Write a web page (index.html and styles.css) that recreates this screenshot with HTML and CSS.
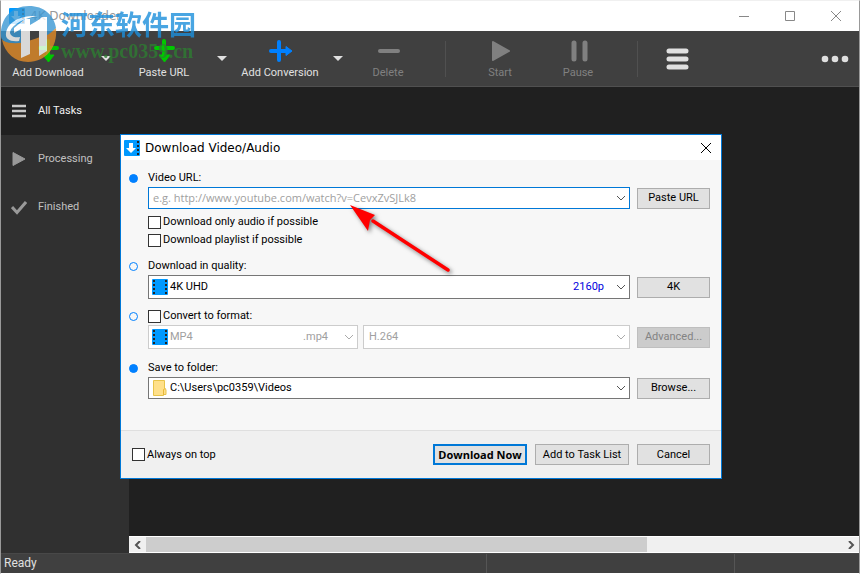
FILE: index.html
```html
<!DOCTYPE html>
<html lang="en">
<head>
  <meta charset="UTF-8">
  <meta name="viewport" content="width=device-width, initial-scale=1.0">
  <title>4K Downloader</title>
  <link rel="stylesheet" href="styles.css">
</head>
<body>

  <div class="window">
    <header class="titlebar">
      <svg class="app-icon" width="16" height="16" viewBox="0 0 16 16">
        <rect width="16" height="16" rx="1" fill="#0099ff"/>
        <path d="M5 3h4v5h3l-5 5-5-5h3z" fill="#fff"/>
        <path d="M14 1v15" stroke="#222" stroke-width="2" stroke-dasharray="2 2"/>
      </svg>
      <h1>4K Downloader</h1>
      <div class="window-buttons">
        <button aria-label="Minimize"><svg width="12" height="12" viewBox="0 0 12 12"><path d="M1 6.500h10"/></svg></button>
        <button aria-label="Maximize"><svg width="12" height="12" viewBox="0 0 12 12"><path d="M1.500 1.500h9v9h-9z"/></svg></button>
        <button aria-label="Close"><svg width="12" height="12" viewBox="0 0 12 12"><path d="M1 1l10 10M11 1L1 11"/></svg></button>
      </div>
    </header>

    <nav class="toolbar">
      <button class="tool">
        <svg width="24" height="24" viewBox="0 0 24 24"><path d="M12 2v14M4 9h17" stroke="#00c800" stroke-width="4" stroke-linecap="round"/><path d="M7 16h11l-5.500 7z" fill="#00c800" stroke="#00c800" stroke-linejoin="round"/></svg>
        Add Download
      </button>
      <button class="drop" aria-label="Add Download options"></button>
      <button class="tool">
        <svg width="24" height="24" viewBox="0 0 24 24"><path d="M12 2v14M4 9h17" stroke="#00c800" stroke-width="4" stroke-linecap="round"/><path d="M7 16h11l-5.500 7z" fill="#00c800" stroke="#00c800" stroke-linejoin="round"/></svg>
        Paste URL
      </button>
      <button class="drop" aria-label="Paste URL options"></button>
      <button class="tool">
        <svg width="24" height="24" viewBox="0 0 24 24"><path d="M11 3v18M3 12h15" stroke="#0080ff" stroke-width="4" stroke-linecap="round"/><path d="M18 7.500l6 4.500-6 4.500z" fill="#0080ff" stroke="#0080ff" stroke-linejoin="round"/></svg>
        Add Conversion
      </button>
      <button class="drop" aria-label="Add Conversion options"></button>
      <button class="tool tool-delete" disabled>
        <svg width="24" height="24" viewBox="0 0 24 24"><path d="M4 12h18" stroke="#808080" stroke-width="4" stroke-linecap="round"/></svg>
        Delete
      </button>
      <span class="separator separator-start"></span>
      <button class="tool tool-run" disabled>
        <svg width="24" height="24" viewBox="0 0 24 24"><path d="M5 3l16 9-16 9z" fill="#808080" stroke="#808080" stroke-width="2" stroke-linejoin="round"/></svg>
        Start
      </button>
      <button class="tool tool-run" disabled>
        <svg width="24" height="24" viewBox="0 0 24 24"><path d="M8 4v16M19 4v16" stroke="#808080" stroke-width="5" stroke-linecap="round"/></svg>
        Pause
      </button>
      <span class="separator separator-end"></span>
      <button class="tool tool-menu" aria-label="View">
        <svg width="24" height="24" viewBox="0 0 24 24"><path d="M4 4h17M4 12h17M4 20h17" stroke="#e0e0e0" stroke-width="5" stroke-linecap="round"/></svg>
      </button>
      <button class="more" aria-label="More">
        <svg width="28" height="8" viewBox="0 0 28 8" fill="#e0e0e0"><circle cx="4" cy="4" r="3.300"/><circle cx="14" cy="4" r="3.300"/><circle cx="24" cy="4" r="3.300"/></svg>
      </button>
    </nav>

    <div class="workspace">
      <aside class="sidebar">
        <button class="active">
          <svg width="16" height="16" viewBox="0 0 16 16"><path d="M1 3h14M1 8h14M1 13h14" stroke="#c8c8c8" stroke-width="2.500"/></svg>
          All Tasks
        </button>
        <button>
          <svg width="16" height="16" viewBox="0 0 16 16"><path d="M2 1.500l12 6.500-12 6.500z" fill="#999" stroke="#999" stroke-linejoin="round"/></svg>
          Processing
        </button>
        <button>
          <svg width="16" height="16" viewBox="0 0 16 16"><path d="M1 8l5 5.500L15 3" fill="none" stroke="#999" stroke-width="3"/></svg>
          Finished
        </button>
      </aside>
      <main class="tasks">
        <div class="scrollbar">
          <button aria-label="Scroll left"><svg width="8" height="8" viewBox="0 0 8 8"><path d="M6 0L2 4l4 4"/></svg></button>
          <div class="track"><div class="thumb"></div></div>
          <button aria-label="Scroll right"><svg width="8" height="8" viewBox="0 0 8 8"><path d="M2 0l4 4-4 4"/></svg></button>
        </div>
      </main>
    </div>

    <footer class="statusbar">
      <span>Ready</span>
      <span></span>
      <span></span>
    </footer>
  </div>

  <!-- Site watermark -->
  <div class="watermark">
    <svg width="58" height="62" viewBox="0 0 58 62">
      <path d="M2 38C16 44 40 38 56 26C58 46 45 60 28 60C15 60 5 51 2 38z" fill="#e08a28"/>
      <path d="M1 34C0 16 12 4 29 4C44 4 54 13 56 26C50 32 46 34 42 35V16L30 23V39C20 42 9 42 4 39C2 38 1 36 1 34z" fill="#3a98d4"/>
      <path d="M6 31C8 18 24 13 37 14C25 16 12 22 10 30C10 34 14 36 20 35L19 39C10 40 5 37 6 31z" fill="#fff"/>
      <path d="M14 26l11-9h5v35l-9 4V27l-7 4zM33 23l9-8h5v34l-8 5V25l-6 3z" fill="#fff"/>
    </svg>
    <div class="watermark-text">
      <p class="watermark-name" lang="zh">河东软件园</p>
      <p class="watermark-site">www.pc0359.cn</p>
    </div>
  </div>

  <form class="dialog" role="dialog" aria-labelledby="dialogTitle">
    <div class="dialog-title">
      <svg width="16" height="16" viewBox="0 0 16 16">
        <rect width="16" height="16" rx="1" fill="#0099ff"/>
        <path d="M5 3h4v5h3l-5 5-5-5h3z" fill="#fff"/>
        <path d="M14 1v15" stroke="#222" stroke-width="2" stroke-dasharray="2 2"/>
      </svg>
      <h2 id="dialogTitle">Download Video/Audio</h2>
      <button type="button" class="dialog-close" aria-label="Close"><svg width="12" height="12" viewBox="0 0 12 12"><path d="M1 1l10 10M11 1L1 11"/></svg></button>
    </div>

    <div class="dialog-body">
      <section class="group">
        <span class="dot filled"></span>
        <label class="caption" for="url">Video URL:</label>
        <div class="field focused">
          <input type="text" id="url" placeholder="e.g. http://www.youtube.com/watch?v=CevxZvSJLk8">
          <svg class="chevron" width="10" height="6" viewBox="0 0 10 6"><path d="M1 1l4 4 4-4"/></svg>
        </div>
        <button type="button" class="btn">Paste URL</button>
        <div class="checks">
          <label class="check"><input type="checkbox">Download only audio if possible</label>
          <label class="check"><input type="checkbox">Download playlist if possible</label>
        </div>
      </section>

      <section class="group">
        <span class="dot"></span>
        <label class="caption" for="quality">Download in quality:</label>
        <div class="field tall">
          <svg width="16" height="16" viewBox="0 0 16 16"><rect width="16" height="16" rx="1" fill="#0099ff"/><path d="M2 1v15M14 1v15" stroke="#222" stroke-width="2" stroke-dasharray="2 2"/></svg>
          <select id="quality"><option>4K UHD</option></select>
          <span class="resolution">2160p</span>
          <svg class="chevron" width="10" height="6" viewBox="0 0 10 6"><path d="M1 1l4 4 4-4"/></svg>
        </div>
        <button type="button" class="btn">4K</button>
      </section>

      <section class="group">
        <span class="dot"></span>
        <label class="check caption-check"><input type="checkbox">Convert to format:</label>
        <div class="formats">
          <div class="field tall disabled">
            <svg width="16" height="16" viewBox="0 0 16 16"><rect width="16" height="16" rx="1" fill="#0099ff"/><path d="M2 1v15M14 1v15" stroke="#222" stroke-width="2" stroke-dasharray="2 2"/></svg>
            <select aria-label="Format" disabled><option>MP4</option></select>
            <span class="extension">.mp4</span>
            <svg class="chevron" width="10" height="6" viewBox="0 0 10 6"><path d="M1 1l4 4 4-4"/></svg>
          </div>
          <div class="field tall disabled">
            <select aria-label="Codec" disabled><option>H.264</option></select>
            <svg class="chevron" width="10" height="6" viewBox="0 0 10 6"><path d="M1 1l4 4 4-4"/></svg>
          </div>
        </div>
        <button type="button" class="btn" disabled>Advanced...</button>
      </section>

      <section class="group">
        <span class="dot filled"></span>
        <label class="caption" for="folder">Save to folder:</label>
        <div class="field">
          <svg width="16" height="18" viewBox="0 0 16 18"><path d="M1.500 1.500h11v8l1.500 1v5h-2.500v1h-10z" fill="#ffe08a" stroke="#e8c44a"/><path d="M11.500 16v-5.500l2-1" fill="none" stroke="#e8b83a"/></svg>
          <select id="folder"><option>C:\Users\pc0359\Videos</option></select>
          <svg class="chevron" width="10" height="6" viewBox="0 0 10 6"><path d="M1 1l4 4 4-4"/></svg>
        </div>
        <button type="button" class="btn">Browse...</button>
      </section>
    </div>

    <div class="dialog-footer">
      <label class="check"><input type="checkbox">Always on top</label>
      <button type="button" class="btn wide default">Download Now</button>
      <button type="button" class="btn wide">Add to Task List</button>
      <button type="button" class="btn">Cancel</button>
    </div>
  </form>

  <!-- Pointer to the URL field -->
  <svg class="pointer" width="114" height="80" viewBox="0 0 114 80">
    <path d="M103 69L28 20" stroke="#f00" stroke-width="3.500" stroke-linecap="round"/>
    <path d="M5 4L30 14L25 19L23 30z" fill="#f00"/>
  </svg>

</body>
</html>
```

FILE: styles.css
```css
* {
  box-sizing: border-box;
}

body {
  margin: 0;
  font-family: Roboto, "Open Sans", sans-serif;
  font-size: 11px;
  line-height: 18px;
  color: #000;
}

button,
input,
select {
  font: inherit;
  color: inherit;
  margin: 0;
  padding: 0;
}

button {
  border: none;
  background: none;
}

h1,
h2,
p {
  margin: 0;
  font-weight: normal;
}

svg {
  flex: none;
}

.window {
  display: flex;
  flex-direction: column;
  height: 100vh;
  border: 1px solid #999;
  border-top-color: #f0f0f0;
  border-bottom-color: #fff;
  background-color: #202020;
}

.titlebar {
  display: flex;
  align-items: center;
  height: 30px;
  padding-left: 8px;
  background-color: #fff;
}

.titlebar h1 {
  margin-left: 5px;
  font-family: "DejaVu Sans", sans-serif;
  font-size: 12px;
  color: #999;
}

.window-buttons {
  display: flex;
  margin-left: auto;
}

.window-buttons button {
  display: flex;
  align-items: center;
  justify-content: center;
  width: 46px;
  height: 30px;
}

.window-buttons svg,
.dialog-close svg {
  fill: none;
  stroke: #888;
}

.toolbar {
  display: flex;
  align-items: center;
  height: 56px;
  padding-left: 1px;
  background-color: #404040;
  border-bottom: 1px solid #505050;
  color: #e0e0e0;
}

.tool {
  display: flex;
  flex: none;
  flex-direction: column;
  align-items: center;
  width: 92px;
  padding-top: 4px;
  line-height: 20px;
  white-space: nowrap;
}

.tool:disabled {
  color: #808080;
}

.tool-delete {
  width: 76px;
}

.tool-run,
.tool-menu {
  width: 78px;
}

.tool-menu {
  padding-top: 0;
}

.drop {
  display: flex;
  justify-content: center;
  width: 24px;
}

.drop::before {
  content: "";
  border: 5px solid transparent;
  border-top-color: #e0e0e0;
  border-bottom: none;
}

.separator {
  width: 1px;
  height: 36px;
  background-color: #505050;
}

.separator-start {
  margin: 0 15px 0 19px;
}

.separator-end {
  margin-left: 20px;
}

.more {
  display: flex;
  margin-left: auto;
  padding-right: 10px;
}

.workspace {
  display: flex;
  flex: 1;
  min-height: 0;
}

.sidebar {
  width: 128px;
  background-color: #303030;
}

.sidebar button {
  display: flex;
  align-items: center;
  gap: 11px;
  width: 100%;
  height: 48px;
  padding-left: 10px;
  color: #c0c0c0;
}

.sidebar .active {
  background-color: #202020;
  color: #f0f0f0;
}

.tasks {
  display: flex;
  flex: 1;
  flex-direction: column;
  justify-content: flex-end;
}

.scrollbar {
  display: flex;
  height: 17px;
  background-color: #f0f0f0;
  border-top: 1px solid #fff;
  border-bottom: 1px solid #fff;
}

.scrollbar button {
  display: flex;
  align-items: center;
  justify-content: center;
  width: 17px;
}

.scrollbar svg {
  fill: none;
  stroke: #555;
  stroke-width: 2;
}

.track {
  flex: 1;
}

.thumb {
  width: 72%;
  height: 100%;
  background-color: #cdcdcd;
}

.statusbar {
  display: grid;
  grid-template-columns: 486px 248px 1fr;
  height: 20px;
  background-color: #404040;
  border-top: 1px solid #484848;
  color: #e0e0e0;
  font-size: 12px;
}

.statusbar span {
  padding-left: 3px;
  border-right: 1px solid #555;
}

.statusbar span:last-child {
  border-right: none;
}

.watermark {
  position: absolute;
  top: 2px;
  left: 0;
  display: flex;
  gap: 3px;
  opacity: 0.8;
}

.watermark-text {
  padding-top: 7px;
}

.watermark-name {
  font-family: "Noto Sans CJK SC", sans-serif;
  font-size: 27px;
  font-weight: bold;
  line-height: 30px;
  color: #1c8fdb;
}

.watermark-site {
  font-family: "Liberation Serif", serif;
  font-size: 20px;
  font-weight: bold;
  line-height: 24px;
  color: #2e7d32;
}

.dialog {
  position: absolute;
  top: 134px;
  left: 120px;
  width: 70%;
  border: 1px solid #0078d7;
  background-color: #f7f7f7;
}

.dialog-title {
  display: flex;
  align-items: center;
  height: 25px;
  padding: 0 9px 0 3px;
  background-color: #fff;
}

.dialog-title h2 {
  margin-left: 5px;
  font-family: "DejaVu Sans", sans-serif;
  font-size: 12px;
}

.dialog-close {
  display: flex;
  margin-left: auto;
}

.dialog-close svg {
  stroke: #000;
}

.dialog-body {
  display: flex;
  flex-direction: column;
  gap: 8px;
  padding: 9px 11px 31px 0;
}

.group {
  display: grid;
  grid-template-columns: 27px 1fr 73px;
  align-items: center;
}

.group:last-child {
  margin-top: 2px;
}

.dot {
  width: 9px;
  height: 9px;
  margin-left: 8px;
  border: 1px solid #0080ff;
  border-radius: 50%;
}

.dot.filled {
  background-color: #0080ff;
}

.caption,
.caption-check {
  grid-column: 2 / 4;
}

.caption-check {
  height: 18px;
}

.field {
  display: flex;
  grid-column: 2;
  align-items: center;
  height: 22px;
  margin-right: 7px;
  padding: 0 3px;
  border: 1px solid #767676;
  background-color: #fff;
}

.field.tall {
  height: 24px;
}

.field.focused {
  border-color: #0078d7;
}

.field.disabled {
  border-color: #ccc;
  color: #a0a0a0;
}

.field input,
.field select {
  flex: 1;
  min-width: 0;
  padding-left: 2px;
  border: none;
  outline: none;
  background: none;
  appearance: none;
}

.field select {
  opacity: 1;
}

.field input {
  padding-left: 1px;
  font-family: "Open Sans", sans-serif;
}

.field input::placeholder {
  color: #a0a0a0;
}

.chevron {
  fill: none;
  stroke: #555;
}

.disabled .chevron {
  stroke: #aaa;
}

.resolution {
  margin-right: 12px;
  color: #00d;
}

.extension {
  margin-right: 16px;
}

.formats {
  display: grid;
  grid-column: 2;
  grid-template-columns: 215px 1fr;
}

.formats .field {
  grid-column: auto;
}

.formats .field:first-child {
  margin-right: 5px;
}

.btn {
  width: 73px;
  height: 21px;
  border: 1px solid #adadad;
  background-color: #e1e1e1;
  white-space: nowrap;
}

.btn:disabled {
  border-color: #bfbfbf;
  background-color: #ccc;
  color: #838383;
}

.btn.wide {
  width: 94px;
}

.btn.default {
  border: 2px solid #0078d7;
  font-family: "Open Sans", sans-serif;
  font-weight: bold;
}

.checks {
  grid-column: 2;
  margin-top: 4px;
}

.check {
  display: flex;
  align-items: center;
  gap: 2px;
}

.check input {
  width: 13px;
  height: 13px;
  border: 1px solid #333;
  background-color: #fff;
  appearance: none;
}

.dialog-footer {
  display: flex;
  align-items: center;
  gap: 8px;
  height: 48px;
  padding: 0 11px;
  border-top: 1px solid #dfdfdf;
  background-color: #f0f0f0;
}

.dialog-footer .check {
  margin-right: auto;
}

.pointer {
  position: absolute;
  top: 201px;
  left: 345px;
  filter: drop-shadow(2px 2px 2px rgba(0, 0, 0, 0.5));
}
```
